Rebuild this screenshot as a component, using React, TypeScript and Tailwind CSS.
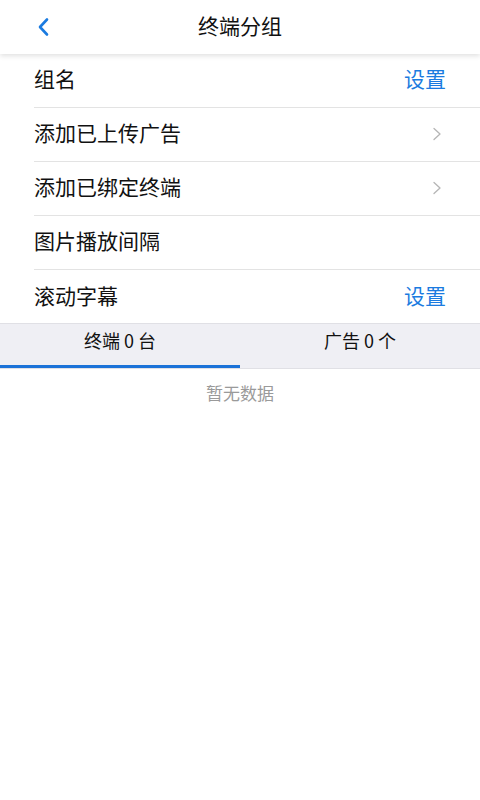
const font = { fontFamily: '"Noto Sans CJK SC", "Noto Sans", sans-serif' }

interface RowProps {
  label: string
  action?: 'set' | 'arrow'
  last?: boolean
}

function Row({ label, action, last }: RowProps) {
  return (
    <div className="pl-[34px]">
      <div
        className={`flex items-center justify-between h-[54px] pb-[5px] pr-[34px] ${
          last ? '' : 'border-b border-[#e3e3e3]'
        }`}
      >
        <span className="text-[21px] leading-[28px] text-[#111]">{label}</span>
        {action === 'set' && <span className="text-[21px] leading-[28px] text-[#1b7be0]">设置</span>}
        {action === 'arrow' && (
          <svg className="w-[10px] h-[14px] mr-[4px] mt-[4px]" viewBox="0 0 10 14" fill="none">
            <path d="M2 1.5l6 5.5-6 5.5" stroke="#b5b5b5" strokeWidth={1.3} strokeLinecap="round" strokeLinejoin="round" />
          </svg>
        )}
      </div>
    </div>
  )
}

export default function App() {
  return (
    <div className="min-h-[800px] w-[480px] bg-white" style={font}>
      {/* Header */}
      <header className="relative z-10 h-[54px] flex items-center justify-center pb-[4px] bg-white shadow-[0_2px_5px_rgba(0,0,0,0.12)]">
        <button className="absolute left-[32px] top-[13px] p-1">
          <svg className="w-[16px] h-[20px]" viewBox="0 0 16 20" fill="none">
            <path d="M11 2.5L4 10l7 7.5" stroke="#1b7be0" strokeWidth={2.6} strokeLinecap="round" strokeLinejoin="round" />
          </svg>
        </button>
        <h1 className="text-[21px] leading-[28px] text-[#111]">终端分组</h1>
      </header>

      {/* Settings list */}
      <div className="bg-white">
        <Row label="组名" action="set" />
        <Row label="添加已上传广告" action="arrow" />
        <Row label="添加已绑定终端" action="arrow" />
        <Row label="图片播放间隔" />
        <Row label="滚动字幕" action="set" last />
      </div>

      {/* Tabs */}
      <div className="flex h-[46px] -mt-[1px] bg-[#efeff4] border-t border-[#e0e0e5] border-b border-[#d6d6d6]">
        <div className="relative flex-1 flex items-center justify-center pb-[12px] text-[18px] leading-[24px] text-[#111]">
          终端 0 台
          <div className="absolute left-0 right-0 bottom-0 h-[3px] bg-[#1b72d8]" />
        </div>
        <div className="flex-1 flex items-center justify-center pb-[12px] text-[18px] leading-[24px] text-[#111]">
          广告 0 个
        </div>
      </div>

      <div className="pt-[12px] text-center text-[17px] leading-[24px] text-[#9a9a9a]">暂无数据</div>
    </div>
  )
}
